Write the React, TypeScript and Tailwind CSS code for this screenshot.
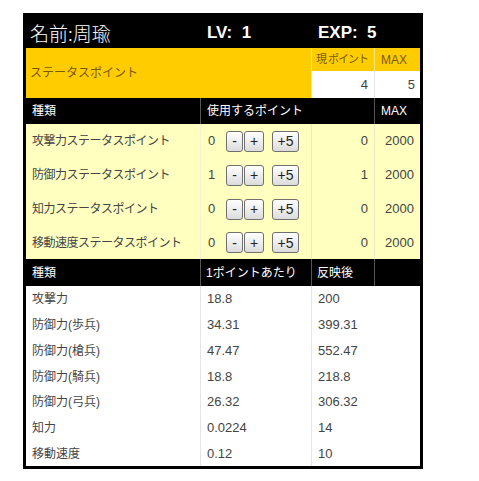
import React from 'react';

const font = { fontFamily: '"Liberation Sans", "Noto Sans CJK JP", sans-serif' };

const statusRows = [
  { name: '攻撃力ステータスポイント', use: 0, val: 0, h: 'h-[34px]' },
  { name: '防御力ステータスポイント', use: 1, val: 1, h: 'h-[34px]' },
  { name: '知力ステータスポイント', use: 0, val: 0, h: 'h-[34px]' },
  { name: '移動速度ステータスポイント', use: 0, val: 0, h: 'h-[33px]' },
];

const resultRows = [
  { name: '攻撃力', per: '18.8', after: '200', h: 'h-[26px]' },
  { name: '防御力(歩兵)', per: '34.31', after: '399.31', h: 'h-[26px]' },
  { name: '防御力(槍兵)', per: '47.47', after: '552.47', h: 'h-[26px]' },
  { name: '防御力(騎兵)', per: '18.8', after: '218.8', h: 'h-[25px]' },
  { name: '防御力(弓兵)', per: '26.32', after: '306.32', h: 'h-[26px]' },
  { name: '知力', per: '0.0224', after: '14', h: 'h-[26px]' },
  { name: '移動速度', per: '0.12', after: '10', h: 'h-[25px]' },
];

function Btn({ label, w }: { label: string; w: string }) {
  return (
    <button
      className={`${w} h-[21px] flex items-center justify-center rounded-[3px] border border-[#707070] bg-gradient-to-b from-white to-[#dcdcdc] text-[14px] text-[#222] leading-none`}
    >
      {label}
    </button>
  );
}

export default function App() {
  return (
    <div className="min-h-[481px] bg-white pt-[13px]" style={font}>
      <div className="ml-[23px] w-[400px] border-[3px] border-black bg-black">
        {/* title */}
        <div className="flex h-[32px] items-center text-white">
          <div className="w-[174px] pl-[4px] text-[19px] leading-none" style={{ fontFamily: '"Noto Sans CJK JP", sans-serif', fontWeight: 300 }}>
            名前:周瑜
          </div>
          <div className="w-[111px] pl-[7px] text-[17px] font-bold leading-none">LV:&nbsp; 1</div>
          <div className="pl-[7px] text-[17px] font-bold leading-none">EXP:&nbsp; 5</div>
        </div>

        {/* status points */}
        <div className="flex h-[50px] bg-[#ffcc00]">
          <div className="flex w-[285px] items-center pl-[4px] text-[12px] text-[#7a5a00]">ステータスポイント</div>
          <div className="flex flex-col">
            <div className="flex h-[23px] text-[12px] text-[#7a5a00]">
              <div className="flex w-[63px] items-center overflow-hidden whitespace-nowrap border-l border-[#ffe680] pl-[4px] text-[11px] tracking-[-1px]">現 ポイント</div>
              <div className="flex w-[46px] items-center border-l border-[#ffe680] pl-[6px]">MAX</div>
            </div>
            <div className="flex h-[27px] bg-white text-[13px] text-[#444]">
              <div className="flex w-[63px] items-center justify-end border-l border-[#ffe680] pr-[6px]">4</div>
              <div className="flex w-[46px] items-center justify-end border-l border-[#e6e6e6] pr-[5px]">5</div>
            </div>
          </div>
        </div>

        {/* header 1 */}
        <div className="flex h-[26px] items-stretch text-[12px] text-white">
          <div className="flex w-[174px] items-center pl-[6px]">種類</div>
          <div className="flex w-[174px] items-center border-l border-[#555] pl-[6px]">使用するポイント</div>
          <div className="flex w-[46px] items-center border-l border-[#555] pl-[6px]">MAX</div>
        </div>

        {/* status rows */}
        {statusRows.map((r) => (
          <div key={r.name} className={`flex ${r.h} bg-[#ffffc0] text-[13px] text-[#444]`}>
            <div className="flex w-[174px] items-center pl-[6px] text-[12px] whitespace-nowrap tracking-[-0.5px]">{r.name}</div>
            <div className="flex w-[111px] items-center border-l border-[#f3f3d6] pl-[7px]">
              <span className="w-[18px]">{r.use}</span>
              <div className="flex gap-[1px]">
                <Btn label="-" w="w-[17px]" />
                <Btn label="+" w="w-[20px]" />
              </div>
              <div className="ml-[8px]">
                <Btn label="+5" w="w-[27px]" />
              </div>
            </div>
            <div className="flex w-[63px] items-center justify-end border-l border-[#e9e9c4] pr-[6px]">{r.val}</div>
            <div className="flex w-[46px] items-center justify-end border-l border-[#e9e9c4] pr-[6px]">2000</div>
          </div>
        ))}

        {/* header 2 */}
        <div className="flex h-[27px] items-stretch text-[12px] text-white">
          <div className="flex w-[174px] items-center pl-[6px]">種類</div>
          <div className="flex w-[111px] items-center border-l border-[#555] pl-[5px] whitespace-nowrap">1ポイントあたり</div>
          <div className="flex w-[63px] items-center border-l border-[#555] pl-[5px]">反映後</div>
          <div className="w-[46px] border-l border-[#555]"></div>
        </div>

        {/* result rows */}
        {resultRows.map((r) => (
          <div key={r.name} className={`flex ${r.h} bg-white text-[13px] text-[#444]`}>
            <div className="flex w-[174px] items-center pl-[6px] text-[12px]">{r.name}</div>
            <div className="flex w-[111px] items-center border-l border-[#e4e4e4] pl-[6px]">{r.per}</div>
            <div className="flex w-[109px] items-center border-l border-[#e4e4e4] pl-[6px]">{r.after}</div>
          </div>
        ))}
      </div>
    </div>
  );
}
